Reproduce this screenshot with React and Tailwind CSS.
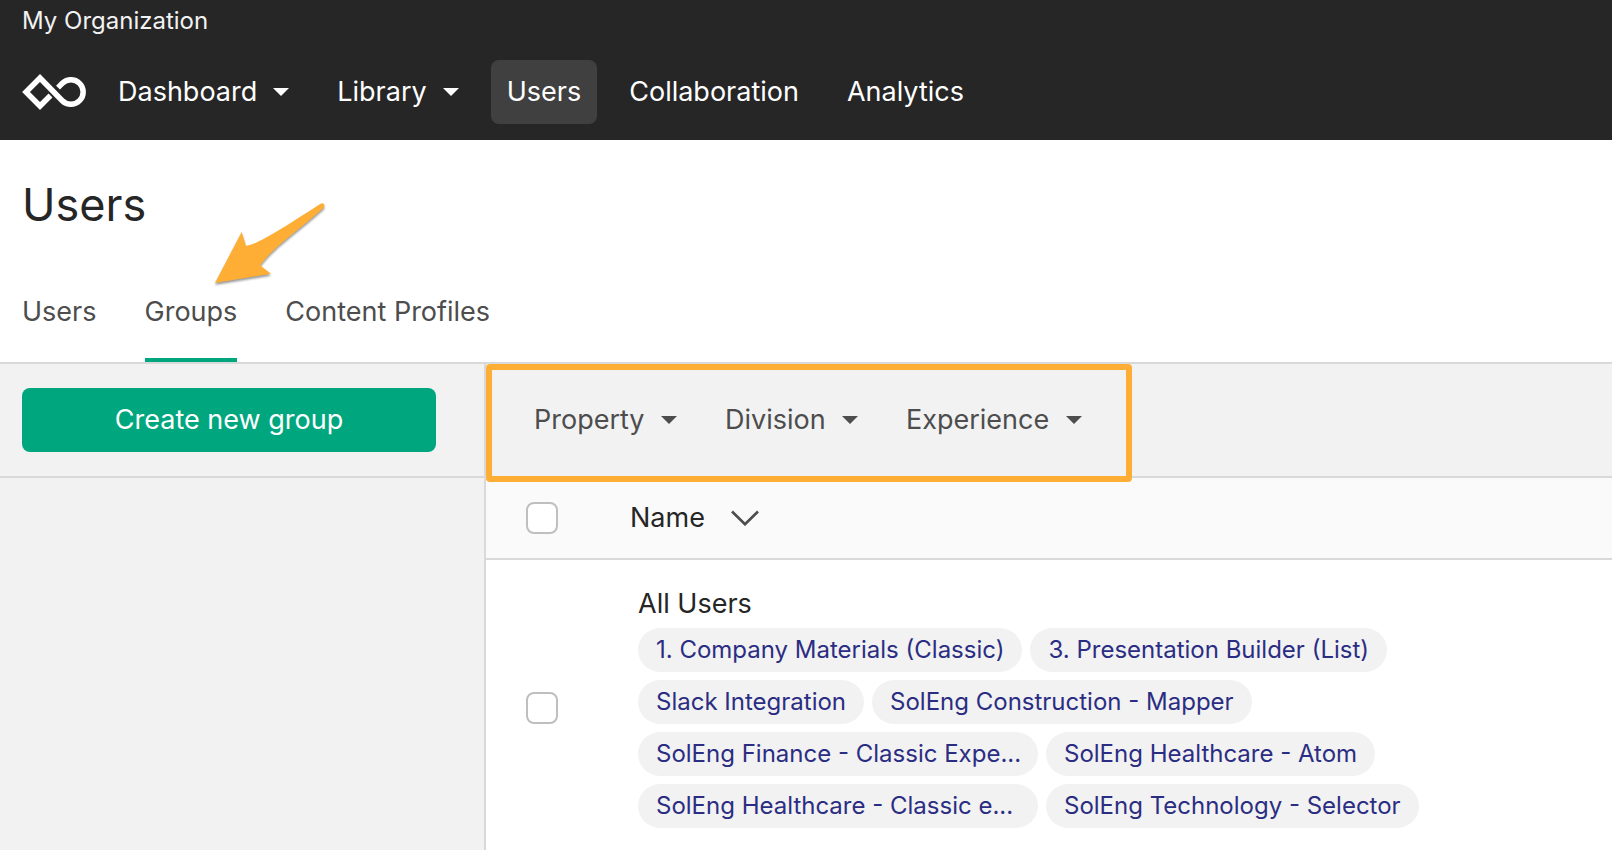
import React from "react";

const navItems = [
  { label: "Dashboard", menu: true },
  { label: "Library", menu: true },
  { label: "Users", active: true },
  { label: "Collaboration" },
  { label: "Analytics" },
];

const tabs = [
  { label: "Users" },
  { label: "Groups", active: true },
  { label: "Content Profiles" },
];

const filters = ["Property", "Division", "Experience"];

const experiences = [
  { name: "1. Company Materials (Classic)" },
  { name: "3. Presentation Builder (List)" },
  { name: "Slack Integration" },
  { name: "SolEng Construction - Mapper" },
  { name: "SolEng Finance - Classic Expe...", shortened: true },
  { name: "SolEng Healthcare - Atom" },
  { name: "SolEng Healthcare - Classic e...", shortened: true },
  { name: "SolEng Technology - Selector" },
];

function Caret({ className = "" }) {
  return (
    <svg viewBox="0 0 16 8" aria-hidden="true" className={`h-2 w-4 fill-current ${className}`}>
      <path d="M0 0h16L8 8z" />
    </svg>
  );
}

function Logo() {
  return (
    <svg viewBox="0 0 64 36" className="h-9 w-16" fill="none" stroke="white" strokeWidth="5.5" aria-hidden="true">
      <path d="M28.500 21.500 18 32 4 18 18 4 40.3 26.7A12.25 12.25 0 1 0 40.3 9.3L36 13.6" />
    </svg>
  );
}

function PointerArrow() {
  return (
    <svg
      viewBox="0 0 116 86"
      aria-hidden="true"
      className="pointer-events-none absolute top-[202px] left-[213px] h-[86px] w-[116px] overflow-visible fill-[#ffae35] drop-shadow-[0_2px_1px_rgba(0,0,0,0.4)]"
    >
      <path d="M2 81 28.7 30 33 44C46 42 76 22 107.5 1.7Q109.5 0.700 111 2Q112 4 110.500 6C86 28 58 47 47.300 63.500L58 71.700Z" />
    </svg>
  );
}

function Checkbox({ label }) {
  return (
    <input
      type="checkbox"
      aria-label={label}
      className="block size-8 appearance-none rounded-lg border-2 border-[#bfbfbf] bg-white checked:bg-[#00a77e]"
    />
  );
}

export default function App() {
  return (
    <div className="relative flex h-screen flex-col overflow-hidden bg-white font-['Inter',sans-serif] text-[27px] leading-10 text-[#262626]">
      <header className="bg-[#262626] px-[22px] pb-4 text-white">
        <p className="pt-[5px] text-2xl leading-8 text-[#f2f2f2]">My Organization</p>
        <nav className="mt-[23px] flex items-center gap-4" aria-label="Main">
          <a href="#home" aria-label="Home">
            <Logo />
          </a>
          {navItems.map((item) =>
            item.menu ? (
              <button key={item.label} type="button" aria-haspopup="menu" className="flex h-16 items-center gap-4 rounded-lg px-4">
                {item.label}
                <Caret />
              </button>
            ) : (
              <a
                key={item.label}
                href={`#${item.label.toLowerCase()}`}
                aria-current={item.active ? "page" : undefined}
                className={`flex h-16 items-center rounded-lg px-4 ${item.active ? "bg-[#404040]" : ""}`}
              >
                {item.label}
              </a>
            )
          )}
        </nav>
      </header>

      <section className="border-b-2 border-[#d9d9d9] px-[22px] pt-9">
        <h1 className="text-[45px] leading-[58px]">Users</h1>
        <nav className="mt-[54px] flex gap-12 text-[#4d4d4d]" aria-label="Users sections">
          {tabs.map((tab) => (
            <a
              key={tab.label}
              href={`#${tab.label.toLowerCase().replace(" ", "-")}`}
              aria-current={tab.active ? "page" : undefined}
              className={`border-b-4 pt-1 pb-[26px] ${tab.active ? "border-[#00a77e]" : "border-transparent"}`}
            >
              {tab.label}
            </a>
          ))}
        </nav>
      </section>

      <div className="flex min-h-0 flex-1">
        <aside className="w-[486px] shrink-0 border-r-2 border-[#d9d9d9] bg-[#f2f2f2]">
          <div className="border-b-2 border-[#d9d9d9] py-6 pr-12 pl-[22px]">
            <button type="button" className="h-16 w-full rounded-lg bg-[#00a77e] text-white">
              Create new group
            </button>
          </div>
        </aside>

        <main className="min-w-0 flex-1">
          <div className="relative flex h-[114px] items-center gap-12 border-b-2 border-[#d9d9d9] bg-[#f2f2f2] px-12 text-[#4d4d4d]">
            {filters.map((filter) => (
              <div key={filter} className="relative flex items-center">
                <select aria-label={filter} className="appearance-none bg-transparent pr-8">
                  <option>{filter}</option>
                </select>
                <Caret className="pointer-events-none absolute right-0" />
              </div>
            ))}
            <div className="pointer-events-none absolute top-0 left-0 h-[118px] w-[646px] rounded-sm border-6 border-[#ffae35]" />
          </div>

          <table className="w-full text-left">
            <thead>
              <tr className="h-[81px] border-b-2 border-[#d9d9d9] bg-[#fafafa]">
                <th className="w-[144px] pl-10">
                  <Checkbox label="Select all groups" />
                </th>
                <th className="font-normal">
                  <button type="button" className="flex items-center gap-[26px]">
                    Name
                    <svg viewBox="0 0 28 16" aria-hidden="true" className="h-4 w-7" fill="none" stroke="#4d4d4d" strokeWidth="2.6">
                      <path d="M1 1.500 14 14.300 27 1.500" />
                    </svg>
                  </button>
                </th>
              </tr>
            </thead>
            <tbody>
              <tr className="border-b-2 border-[#d9d9d9]">
                <td className="pl-10">
                  <Checkbox label="Select All Users" />
                </td>
                <td className="pt-6 pb-7 pl-2">
                  <p>All Users</p>
                  <ul className="mt-1 flex flex-wrap gap-2">
                    {experiences.map(({ name, shortened }) => (
                      <li
                        key={name}
                        className={`h-11 rounded-full bg-[#f2f2f2] px-[18px] text-2xl leading-11 whitespace-nowrap text-[#2b2d83] ${shortened ? "w-[400px]" : ""}`}
                      >
                        {name}
                      </li>
                    ))}
                  </ul>
                </td>
              </tr>
            </tbody>
          </table>
        </main>
      </div>

      <PointerArrow />
    </div>
  );
}
